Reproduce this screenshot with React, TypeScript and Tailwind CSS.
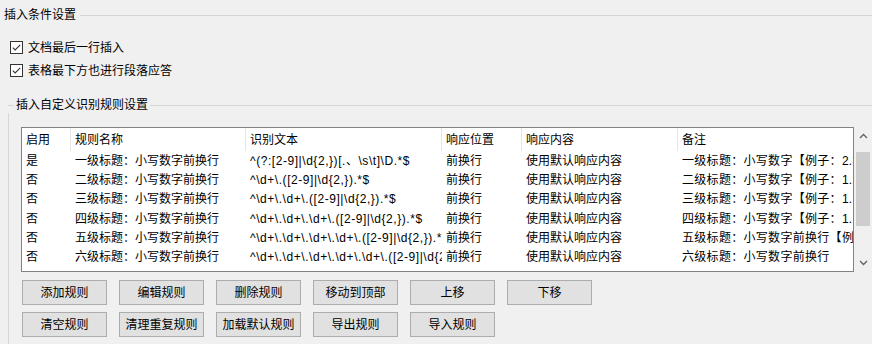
import type { ReactNode } from 'react'

interface Rule {
  enabled: string
  name: string
  pattern: string
  position: string
  response: string
  note: string
}

const rules: Rule[] = [
  {
    enabled: '是',
    name: '一级标题：小写数字前换行',
    pattern: '^(?:[2-9]|\\d{2,})[.、\\s\\t]\\D.*$',
    position: '前换行',
    response: '使用默认响应内容',
    note: '一级标题：小写数字【例子：2.标题】',
  },
  {
    enabled: '否',
    name: '二级标题：小写数字前换行',
    pattern: '^\\d+\\.([2-9]|\\d{2,}).*$',
    position: '前换行',
    response: '使用默认响应内容',
    note: '二级标题：小写数字【例子：1.2标题】',
  },
  {
    enabled: '否',
    name: '三级标题：小写数字前换行',
    pattern: '^\\d+\\.\\d+\\.([2-9]|\\d{2,}).*$',
    position: '前换行',
    response: '使用默认响应内容',
    note: '三级标题：小写数字【例子：1.1.2标题】',
  },
  {
    enabled: '否',
    name: '四级标题：小写数字前换行',
    pattern: '^\\d+\\.\\d+\\.\\d+\\.([2-9]|\\d{2,}).*$',
    position: '前换行',
    response: '使用默认响应内容',
    note: '四级标题：小写数字【例子：1.1.1.2标题】',
  },
  {
    enabled: '否',
    name: '五级标题：小写数字前换行',
    pattern: '^\\d+\\.\\d+\\.\\d+\\.\\d+\\.([2-9]|\\d{2,}).*$',
    position: '前换行',
    response: '使用默认响应内容',
    note: '五级标题：小写数字前换行【例子：1.1.1.1.2】',
  },
  {
    enabled: '否',
    name: '六级标题：小写数字前换行',
    pattern: '^\\d+\\.\\d+\\.\\d+\\.\\d+\\.\\d+\\.([2-9]|\\d{2,}).*$',
    position: '前换行',
    response: '使用默认响应内容',
    note: '六级标题：小写数字前换行',
  },
]

const columns = [
  { key: 'enabled', label: '启用', width: 'w-[49px]', cell: '' },
  { key: 'name', label: '规则名称', width: 'w-[175px]', cell: '' },
  { key: 'pattern', label: '识别文本', width: 'w-[196px]', cell: 'tracking-[0.55px]' },
  { key: 'position', label: '响应位置', width: 'w-[80px]', cell: '' },
  { key: 'response', label: '响应内容', width: 'w-[156px]', cell: '' },
  { key: 'note', label: '备注', width: 'w-[200px]', cell: 'tracking-[0.3px]' },
] as const

const buttonRows = [
  ['添加规则', '编辑规则', '删除规则', '移动到顶部', '上移', '下移'],
  ['清空规则', '清理重复规则', '加载默认规则', '导出规则', '导入规则'],
]

function CheckBox({ label }: { label: string }) {
  return (
    <label className="flex h-[23px] items-center gap-[5px] pl-[10px]">
      <svg width="13" height="13" viewBox="0 0 13 13" className="shrink-0">
        <rect x="0.5" y="0.5" width="12" height="12" fill="#ffffff" stroke="#333333" />
        <polyline points="2.8,6.6 5.2,9 10.2,3.8" fill="none" stroke="#333333" strokeWidth="1.1" />
      </svg>
      <span>{label}</span>
    </label>
  )
}

function WinButton({ children }: { children: ReactNode }) {
  return (
    <button
      type="button"
      className="flex h-[25px] w-[85px] items-center justify-center border border-[#adadad] bg-[#e1e1e1] text-[12px] text-black"
    >
      {children}
    </button>
  )
}

function Chevron({ up }: { up?: boolean }) {
  return (
    <svg width="9" height="6" viewBox="0 0 9 6">
      <polyline
        points={up ? '1,5 4.5,1.5 8,5' : '1,1 4.5,4.5 8,1'}
        fill="none"
        stroke="#606060"
        strokeWidth="1.3"
      />
    </svg>
  )
}

export default function App() {
  return (
    <div
      className="h-[344px] w-[872px] overflow-hidden bg-[#f0f0f0] text-[12px] leading-[16px] text-black"
      style={{ fontFamily: '"Liberation Sans", "Noto Sans CJK SC", sans-serif' }}
    >
      {/* Outer group title */}
      <div className="flex items-center pt-[7px]">
        <span className="pl-[4px] pr-[4px]">插入条件设置</span>
        <div className="h-px flex-1 bg-[#d5d5d5]" />
      </div>

      {/* Checkboxes */}
      <div className="mt-[13px] flex flex-col">
        <CheckBox label="文档最后一行插入" />
        <CheckBox label="表格最下方也进行段落应答" />
      </div>

      {/* Inner group */}
      <div className="ml-[8px] mt-[15px]">
        <div className="flex items-center">
          <div className="h-px w-[6px] bg-[#d5d5d5]" />
          <span className="px-[2px]">插入自定义识别规则设置</span>
          <div className="h-px flex-1 bg-[#d5d5d5]" />
        </div>
        <div className="h-[260px] border-l border-[#d5d5d5] pl-[12px] pt-[14px]">
          {/* Rules table + scrollbar */}
          <div className="flex h-[145px]">
            <div className="w-[833px] overflow-hidden border border-[#828282] bg-white">
              <div className="flex h-[23px]">
                {columns.map((c) => (
                  <div
                    key={c.key}
                    className={`${c.width} flex shrink-0 items-center border-r border-[#e5e5e5] pl-[4px]`}
                  >
                    {c.label}
                  </div>
                ))}
              </div>
              {rules.map((r, i) => (
                <div key={i} className="flex h-[19.3px] items-center">
                  {columns.map((c) => (
                    <div
                      key={c.key}
                      className={`${c.width} ${c.cell} shrink-0 overflow-hidden whitespace-nowrap pl-[4px]`}
                    >
                      {r[c.key]}
                    </div>
                  ))}
                </div>
              ))}
            </div>
            <div className="flex w-[18px] flex-col items-center">
              <div className="flex h-[17px] items-center justify-center">
                <Chevron up />
              </div>
              <div className="mt-[8px] h-[74px] w-[14px] bg-[#cdcdcd]" />
              <div className="flex-1" />
              <div className="flex h-[17px] items-center justify-center pb-[2px]">
                <Chevron />
              </div>
            </div>
          </div>

          {/* Buttons */}
          <div className="mt-[8px] flex flex-col gap-[7px] pl-[1px]">
            {buttonRows.map((row, i) => (
              <div key={i} className="flex gap-[12px]">
                {row.map((b) => (
                  <WinButton key={b}>{b}</WinButton>
                ))}
              </div>
            ))}
          </div>
        </div>
      </div>
    </div>
  )
}
